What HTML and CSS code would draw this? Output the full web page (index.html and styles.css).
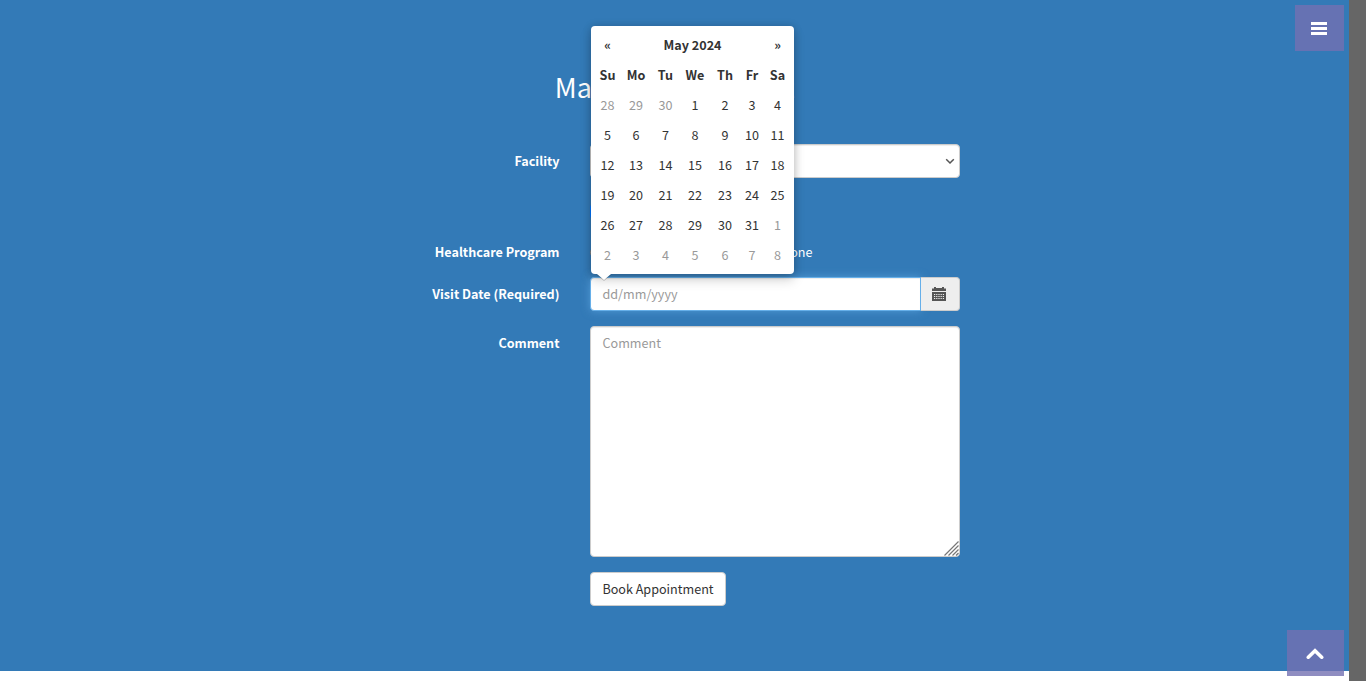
FILE: index.html
```html
<!DOCTYPE html>
<html lang="en">
<head>
<meta charset="utf-8">
<title>Make Appointment</title>
<link rel="stylesheet" href="styles.css">
</head>
<body>
<main class="page">
  <h2 class="title">Make Appointment</h2>
  <form class="form">
    <div class="row facility">
      <label class="label">Facility</label>
      <div class="control select">
        <svg class="chevron" width="10" height="7" viewBox="0 0 10 7"><path d="M1.200 1.200L5 5l3.800-3.800" fill="none" stroke="#555" stroke-width="1.500"/></svg>
      </div>
    </div>
    <div class="row readmission">
      <span class="label"></span>
      <span class="checkbox"></span>
    </div>
    <div class="row program">
      <span class="label">Healthcare Program</span>
      <div class="choices">
        <span class="radio on"></span>
        <label class="choice"><span class="radio"></span>None</label>
      </div>
    </div>
    <div class="row visit">
      <label class="label">Visit Date (Required)</label>
      <div class="group">
        <div class="control date">dd/mm/yyyy</div>
        <div class="addon">
          <svg width="14" height="14" viewBox="0 0 14 14"><path d="M0 4V1.500h2V0h2v1h6V0h2v1.500h2V4z" fill="#555"/><path d="M0 5h14v9H0z" fill="#555"/><path d="M2 7.500h10M2 9.500h10M2 11.500h10" stroke="#eee" stroke-width="1" stroke-dasharray="1.200 1"/></svg>
        </div>
        <div class="calendar">
          <div class="cal-grid">
            <b>«</b><b class="month">May 2024</b><b>»</b>
            <b>Su</b><b>Mo</b><b>Tu</b><b>We</b><b>Th</b><b>Fr</b><b>Sa</b>
            <i>28</i><i>29</i><i>30</i><span>1</span><span>2</span><span>3</span><span>4</span>
            <span>5</span><span>6</span><span>7</span><span>8</span><span>9</span><span>10</span><span>11</span>
            <span>12</span><span>13</span><span>14</span><span>15</span><span>16</span><span>17</span><span>18</span>
            <span>19</span><span>20</span><span>21</span><span>22</span><span>23</span><span>24</span><span>25</span>
            <span>26</span><span>27</span><span>28</span><span>29</span><span>30</span><span>31</span><i>1</i>
            <i>2</i><i>3</i><i>4</i><i>5</i><i>6</i><i>7</i><i>8</i>
          </div>
        </div>
      </div>
    </div>
    <div class="row comment">
      <label class="label">Comment</label>
      <div class="control area">Comment
        <svg class="grip" width="15" height="15" viewBox="0 0 15 15"><path d="M.5 14.500l14-14M4.500 14.500l10-10M8.500 14.500l6-6M12 14.500l2.500-2.500" stroke="#777" stroke-width="1.200"/></svg>
      </div>
    </div>
    <div class="row">
      <span class="label"></span>
      <button type="button" class="book">Book Appointment</button>
    </div>
  </form>
</main>
<div class="scrollbar"></div>
<a class="menu"><svg width="16" height="13" viewBox="0 0 16 13"><path d="M0 0h16v3H0zM0 5h16v3H0zM0 10h16v3H0z" fill="#fff"/></svg></a>
<a class="top"><svg width="18" height="12" viewBox="0 0 18 12"><path d="M2.300 9.200L9 2.800l6.700 6.400" fill="none" stroke="#fff" stroke-width="3.600" stroke-linecap="round"/></svg></a>
</body>
</html>
```
FILE: styles.css
```css
* { box-sizing: border-box; }
body {
  margin: 0;
  height: 681px;
  overflow: hidden;
  background: #fff;
  font-family: "Noto Sans CJK SC", "Noto Sans", sans-serif;
  font-size: 12.6px;
  line-height: 20px;
  color: #333;
}
.page {
  width: 1349px;
  height: 671px;
  padding-top: 70px;
  background: #337ab7;
  color: #fff;
}
.title {
  margin: 0 0 41px;
  height: 33px;
  line-height: 33px;
  font-size: 27px;
  font-weight: 400;
  text-align: center;
}
.form { width: 570px; margin-left: 390px; }
.row { display: flex; gap: 30px; }
.label { width: 170px; padding: 7px .5px 0 0; text-align: right; font-weight: 700; }
.control {
  width: 370px;
  height: 34px;
  padding: 6px 12px 6px 11.5px;
  border: 1px solid #ccc;
  border-radius: 4px;
  background: #fff;
  color: #999;
  box-shadow: inset 0 1px 1px rgba(0,0,0,.075);
}
.facility { height: 49px; }
.select { display: flex; justify-content: flex-end; align-items: center; padding-right: 4px; }
.readmission { height: 42px; padding-top: 12px; }
.choice { display: flex; align-items: center; gap: 7px; height: 20px; }
.checkbox { width: 13px; height: 13px; border-radius: 2px; background: #0075ff; }
.program { height: 42px; }
.choices { display: flex; justify-content: space-between; align-items: center; width: 222.5px; height: 34px; }
.radio { width: 13px; height: 13px; border: 1px solid #767676; border-radius: 50%; background: #fff; }
.visit { height: 49px; }
.group { position: relative; display: flex; width: 370px; }
.date {
  width: 331px;
  border-color: #66afe9;
  border-radius: 4px 0 0 4px;
  box-shadow: inset 0 1px 1px rgba(0,0,0,.075), 0 0 8px rgba(102,175,233,.6);
}
.addon {
  display: flex;
  align-items: center;
  justify-content: center;
  width: 39px;
  height: 34px;
  padding-right: 2px;
  border: 1px solid #ccc;
  border-left: 0;
  border-radius: 0 4px 4px 0;
  background: #eee;
}
.calendar {
  position: absolute;
  left: 1px;
  top: -251px;
  width: 203px;
  height: 248px;
  padding: 4px;
  border-radius: 4px;
  background: #fff;
  color: #333;
  box-shadow: 0 6px 12px rgba(0,0,0,.175), 0 0 8px rgba(0,0,0,.16);
}
.calendar::after {
  content: "";
  position: absolute;
  left: 6px;
  top: 248px;
  border: 7px solid transparent;
  border-top: 6px solid #fff;
  border-bottom: 0;
  filter: drop-shadow(0 1px 0 rgba(0,0,0,.2));
}
.cal-grid {
  display: grid;
  grid-template-columns: 25px 32px 27px 32px 28px 26px 25px;
  grid-auto-rows: 30px;
  line-height: 30px;
  text-align: center;
}
.cal-grid i { font-style: normal; color: #999; }
.month { grid-column: span 5; }
.comment { height: 246px; }
.area { position: relative; height: 231px; }
.grip { position: absolute; right: 0; bottom: 0; }
.book {
  width: 136px;
  height: 34px;
  padding: 0;
  border: 1px solid #ccc;
  border-radius: 4px;
  background: #fff;
  color: #333;
  font: inherit;
}
.scrollbar { position: absolute; left: 1349px; top: 0; width: 17px; height: 681px; background: #666; }
.menu, .top {
  position: absolute;
  display: flex;
  align-items: center;
  justify-content: center;
  background: rgba(115,112,178,.8);
}
.menu { left: 1295px; top: 5px; width: 49px; height: 46px; padding: 1px 1px 0 0; }
.top { left: 1287px; top: 630px; width: 57px; height: 46px; padding: 2px 1px 0 0; }
```
